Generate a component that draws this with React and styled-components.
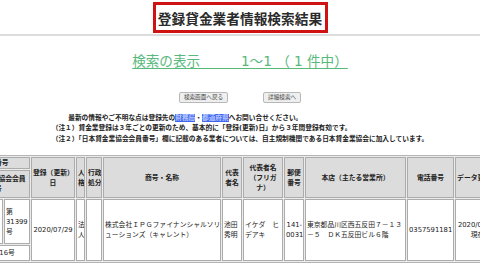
import React from "react";
import styled, { createGlobalStyle } from "styled-components";

const GlobalStyle = createGlobalStyle`
  html, body {
    margin: 0;
    padding: 0;
    background: #fff;
    overflow: hidden;
  }
  body {
    font-family: "DejaVu Sans", "Noto Sans CJK JP", sans-serif;
    color: #222;
  }
  * {
    box-sizing: border-box;
  }
`;

const Page = styled.div`
  width: 480px;
  height: 270px;
  overflow: hidden;
  display: flex;
  flex-direction: column;
  align-items: center;
`;

const TitleBox = styled.h1`
  margin: 2px 0 0;
  width: 175px;
  height: 31px;
  border: 3px solid #cf1212;
  display: flex;
  align-items: center;
  justify-content: center;
  font-family: "Noto Sans CJK JP", sans-serif;
  font-size: 13.7px;
  font-weight: 700;
  color: #2b2b2b;
`;

const Rule = styled.hr`
  align-self: stretch;
  margin: 1px 0 0;
  height: 0;
  border: 0;
  border-top: 2px solid #dcdcdc;
`;

const Heading = styled.div`
  margin-top: 17px;
  font-size: 13.6px;
  line-height: 16px;
  color: #58b97c;
  text-decoration: underline;
  text-decoration-thickness: 1px;
  text-underline-offset: 2px;
  white-space: pre;
`;

const ButtonRow = styled.div`
  margin-top: 23px;
  display: flex;
  gap: 35px;
`;

const Button = styled.button`
  height: 11px;
  padding: 0 4px;
  border: 1px solid #b8b8b8;
  border-radius: 2px;
  background: #efefef;
  color: #444;
  font-family: "Noto Sans CJK JP", sans-serif;
  font-size: 5.6px;
  line-height: 9px;
`;

const Notes = styled.div`
  margin-top: 10px;
  font-size: 6.7px;
  line-height: 10.35px;
  font-weight: 700;
  color: #222;
  white-space: nowrap;
`;

const NoteLine = styled.div`
  padding-left: ${(p) => (p.$indent ? 16.5 : 0)}px;
`;

const Link = styled.span`
  background: #3f64f0;
  color: #b9c9ff;
`;

const Table = styled.table`
  flex-shrink: 0;
  align-self: flex-start;
  margin: 11px 0 0 -42px;
  width: 544px;
  table-layout: fixed;
  border-collapse: separate;
  border-spacing: 1px;
  border: 1px solid #b4b4b4;
  background: #ececec;
  font-size: 6.8px;
  line-height: 10px;
`;

const Col = styled.col`
  width: ${(p) => p.$w}px;
`;

const Th = styled.th`
  height: ${(p) => (p.$h ? `${p.$h}px` : "auto")};
  padding: 0 1px;
  border: 1px solid #acacac;
  background: #dcdcdc;
  font-weight: 700;
  text-align: center;
  vertical-align: middle;
  white-space: nowrap;
  overflow: hidden;
  color: #222;
`;

const Td = styled.td`
  height: ${(p) => (p.$h ? `${p.$h}px` : "auto")};
  padding: 0 1px;
  border: 1px solid #acacac;
  background: #fff;
  font-weight: 400;
  text-align: ${(p) => p.$align || "left"};
  vertical-align: middle;
  white-space: nowrap;
  overflow: hidden;
  color: #222;
`;

const widths = [43, 26, 44, 9, 16, 118, 20, 40, 20, 101, 47, 45];

export default function App() {
  return (
    <>
      <GlobalStyle />
      <Page>
        <TitleBox>登録貸金業者情報検索結果</TitleBox>
        <Rule />
        <Heading>{"検索の表示　　　1〜1 （ 1 件中）"}</Heading>
        <ButtonRow>
          <Button>検索画面へ戻る</Button>
          <Button>詳細検索へ</Button>
        </ButtonRow>
        <Notes>
          <NoteLine $indent>
            最新の情報やご不明な点は登録先の<Link>財務局</Link>・<Link>都道府県</Link>へお問い合せください。
          </NoteLine>
          <NoteLine>（注１）貸金業登録は３年ごとの更新のため、基本的に「登録(更新)日」から３年間登録有効です。</NoteLine>
          <NoteLine>（注２）「日本貸金業協会会員番号」欄に記載のある業者については、自主規制機関である日本貸金業協会に加入しています。</NoteLine>
        </Notes>
        <Table>
          <colgroup>
            {widths.map((w, i) => (
              <Col key={i} $w={w} />
            ))}
          </colgroup>
          <thead>
            <tr>
              <Th colSpan={2} $h={12}>登録番号</Th>
              <Th rowSpan={2}>登録（更新）<br />日</Th>
              <Th rowSpan={2}>人<br />格</Th>
              <Th rowSpan={2}>行政<br />処分</Th>
              <Th rowSpan={2}>商号・名称</Th>
              <Th rowSpan={2}>代表<br />者名</Th>
              <Th rowSpan={2}>代表者名<br />（フリガ<br />ナ）</Th>
              <Th rowSpan={2}>郵便<br />番号</Th>
              <Th rowSpan={2}>本店（主たる営業所）</Th>
              <Th rowSpan={2}>電話番号</Th>
              <Th rowSpan={2}>データ更新日</Th>
            </tr>
            <tr>
              <Th colSpan={2} $h={28}>日本貸金業協会会員<br />番号</Th>
            </tr>
          </thead>
          <tbody>
            <tr>
              <Td $h={45}>関東財務<br />局長（01）</Td>
              <Td>第<br />31399<br />号</Td>
              <Td rowSpan={2} $align="center">2020/07/29</Td>
              <Td rowSpan={2}>法<br />人</Td>
              <Td rowSpan={2} />
              <Td rowSpan={2}>株式会社ＩＰＧファイナンシャルソリ<br />ューションズ（キャレント）</Td>
              <Td rowSpan={2}>池田<br />秀明</Td>
              <Td rowSpan={2}>イケダ　ヒ<br />デアキ</Td>
              <Td rowSpan={2} $align="right">141-<br />0031</Td>
              <Td rowSpan={2}>東京都品川区西五反田７－１３<br />－５　ＤＫ五反田ビル６階</Td>
              <Td rowSpan={2} $align="center">0357591181</Td>
              <Td rowSpan={2} $align="center">2020/07/29<br />現在</Td>
            </tr>
            <tr>
              <Td colSpan={2} $h={16} $align="center">第005616号</Td>
            </tr>
          </tbody>
        </Table>
      </Page>
    </>
  );
}
